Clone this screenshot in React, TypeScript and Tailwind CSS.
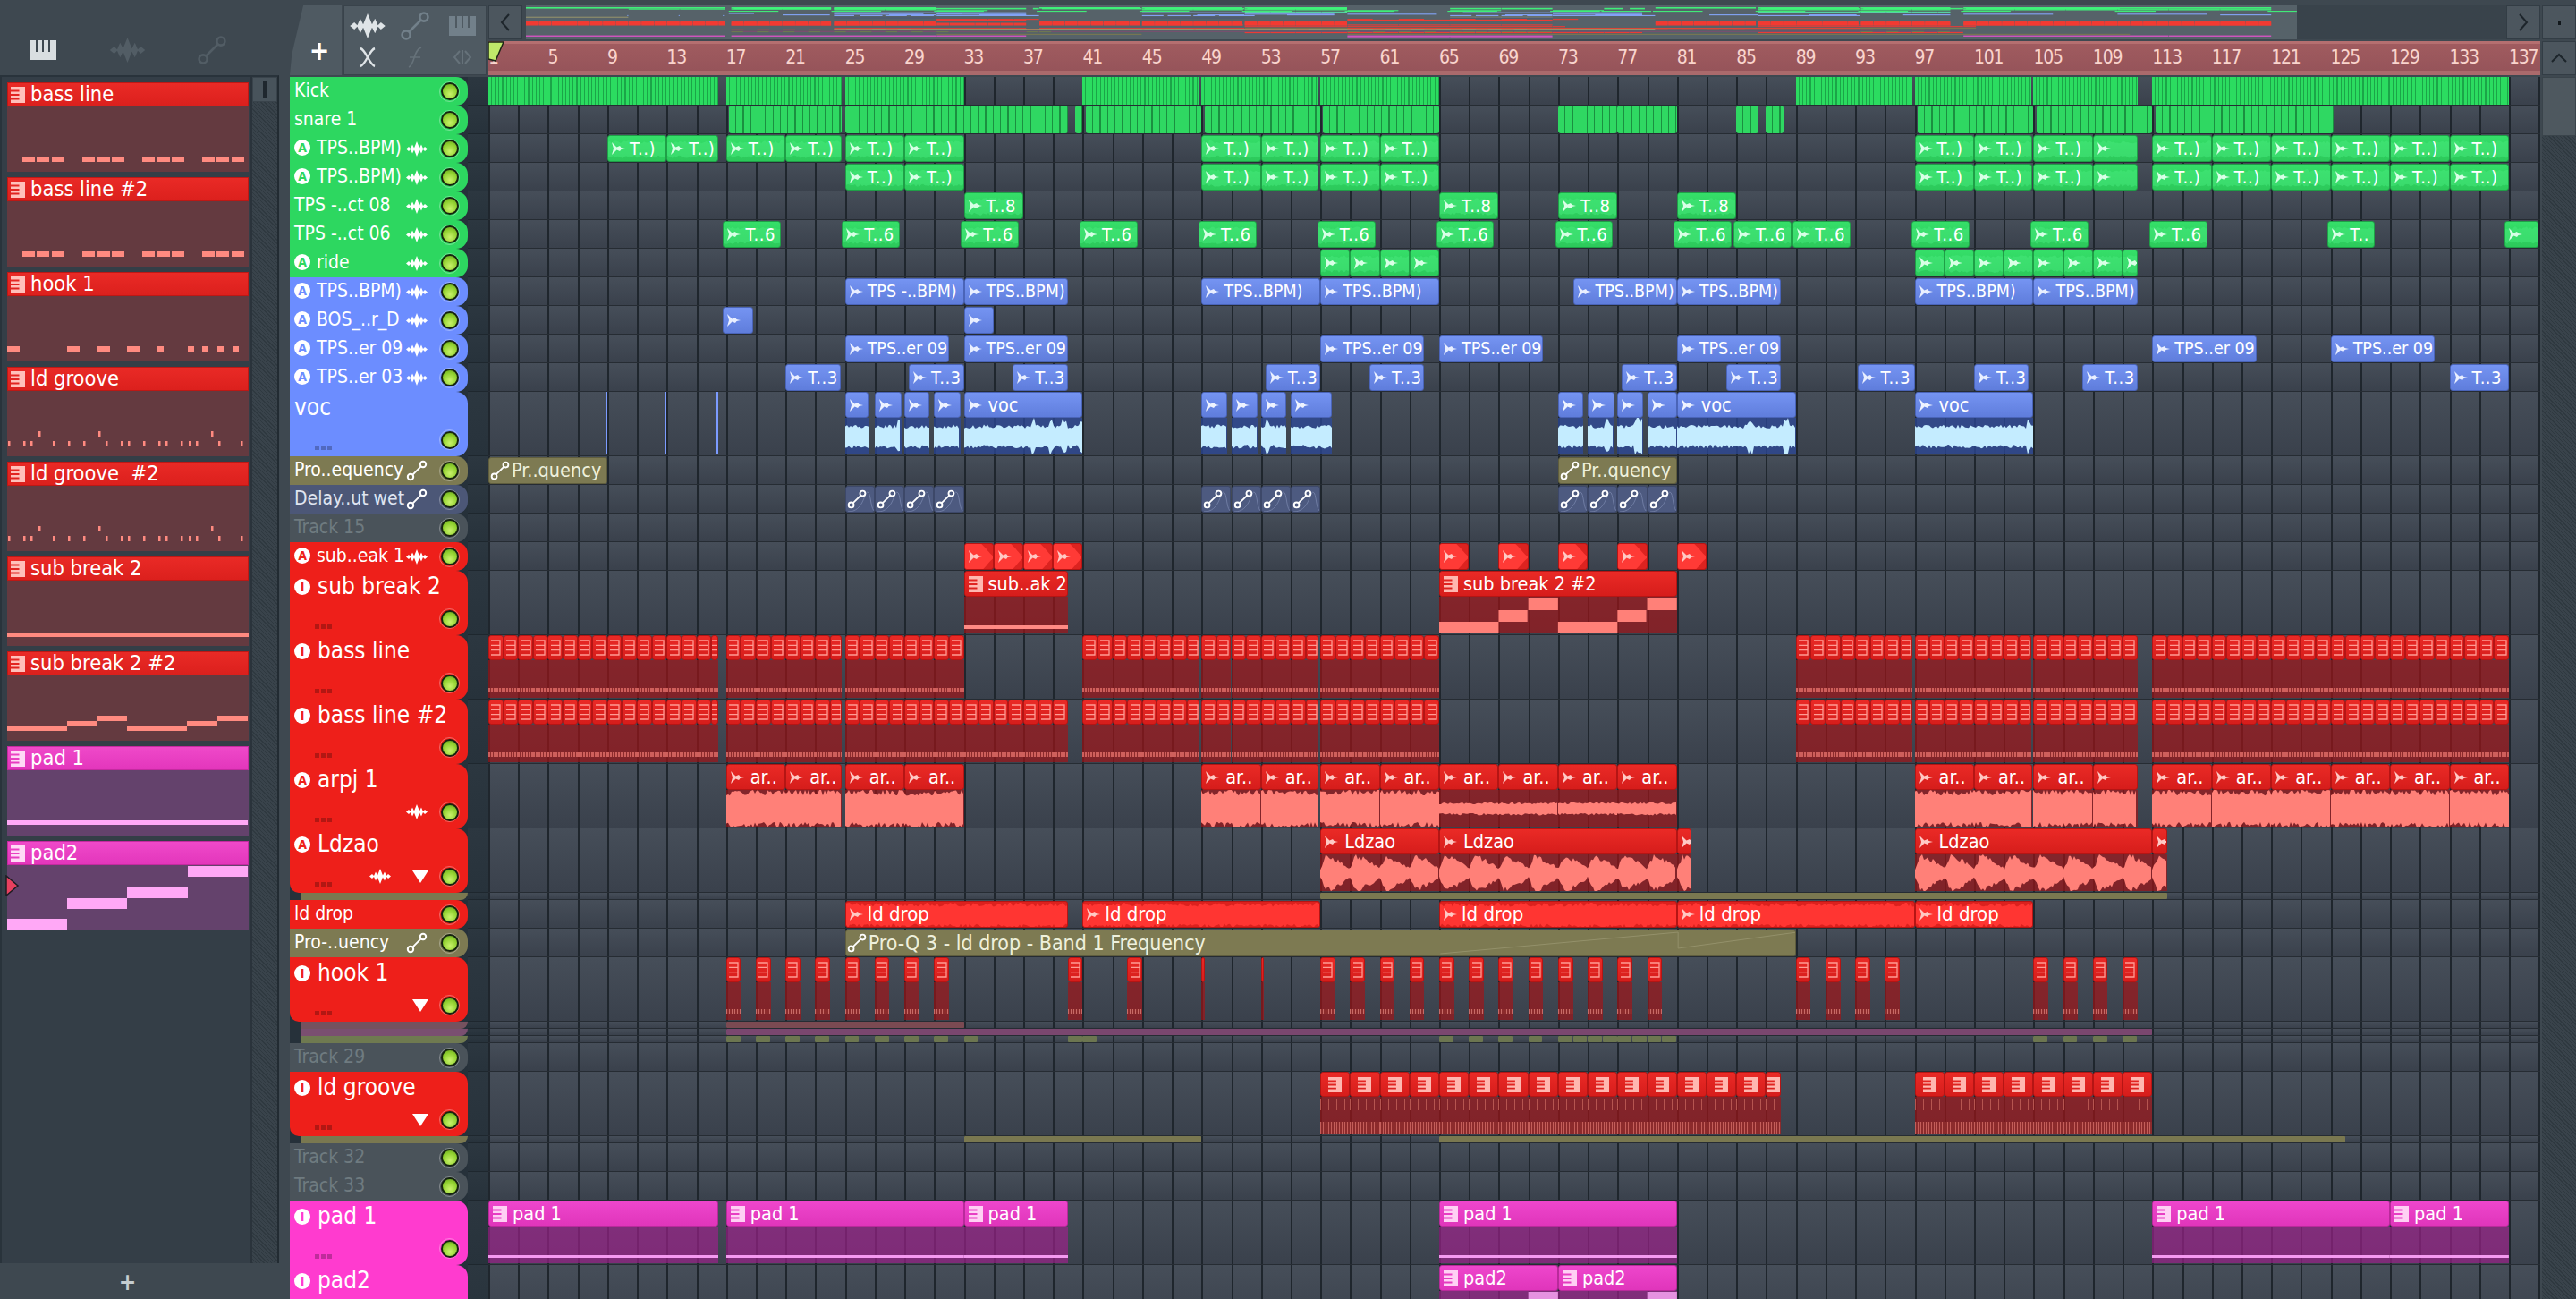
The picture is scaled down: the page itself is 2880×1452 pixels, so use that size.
import React from "react";

const BAR = 16.61;
const px = (b: number) => (b - 1) * BAR;
const rnd = (i: number) => {
  const x = Math.sin(i * 12.9898 + 4.1) * 43758.5453;
  return x - Math.floor(x);
};
function wavePath(w: number, h: number, seed: number, amp: (x: number) => number, step = 2) {
  const top: string[] = [];
  const bot: string[] = [];
  for (let x = 0; x <= w; x += step) {
    const a = Math.min(1, amp(x) * (0.74 + 0.36 * rnd(seed + x)));
    const b = Math.min(1, amp(x) * (0.74 + 0.36 * rnd(seed + x + 777)));
    top.push(`${x} ${(h / 2 - (a * h) / 2).toFixed(1)}`);
    bot.unshift(`${x} ${(h / 2 + (b * h) / 2).toFixed(1)}`);
  }
  return "M" + top.concat(bot).join("L") + "Z";
}

const WaveIcon = ({ c = "#fff", w = 24, h = 17 }: { c?: string; w?: number; h?: number }) => (
  <svg width={w} height={h} viewBox="0 0 24 17" className="shrink-0">
    <path fill={c} d="M0 8.5L3 6L5 8L7 3.5L9 7.5L12 0L15 7.5L17 3.5L19 8L21 6L24 8.5L21 11L19 9L17 13.5L15 9.5L12 17L9 9.5L7 13.5L5 9L3 11Z" />
  </svg>
);
const AutoIcon = ({ c = "#fff", s = 22, sw = 2 }: { c?: string; s?: number; sw?: number }) => (
  <svg width={s} height={s} viewBox="0 0 24 24" fill="none" stroke={c} strokeWidth={sw} className="shrink-0">
    <circle cx="5" cy="19" r="3.2" />
    <circle cx="19" cy="5" r="3.2" />
    <path d="M7.4 16.6L16.6 7.4" />
  </svg>
);
const PianoBig = ({ c = "#fff" }: { c?: string }) => (
  <svg width="30" height="22" viewBox="0 0 30 22" className="shrink-0">
    <path fill={c} fillRule="evenodd" d="M0 0H30V22H0ZM7 0H9V13H7ZM14 0H16V13H14ZM21 0H23V13H21Z" />
  </svg>
);
const PianoClip = ({ c = "#ffb7b0", w = 16, h = 18 }: { c?: string; w?: number; h?: number }) => (
  <svg width={w} height={h} viewBox="0 0 16 18" className="shrink-0">
    <path fill={c} fillRule="evenodd" d="M0 0H16V18H0ZM0 3.6H9.5V5.6H0ZM0 8H9.5V10H0ZM0 12.4H9.5V14.4H0Z" />
  </svg>
);
const PianoLines = () => (
  <svg width="12" height="20" viewBox="0 0 12 20" fill="none" stroke="#ff9c94" strokeWidth="1.3" className="shrink-0">
    <path d="M1 2H11V18H1M1 7.3H11M1 12.6H11" />
  </svg>
);
const AudioGlyph = ({ c = "#fff" }: { c?: string }) => (
  <svg width="16" height="16" viewBox="0 0 16 16" className="shrink-0">
    <path fill={c} d="M1 1L6.5 6.5L10 5L11.5 7L16 8L11.5 9L10 11L6.5 9.5L1 15L3 8Z" />
  </svg>
);
const Led = () => (
  <div className="w-[23px] h-[23px] shrink-0 rounded-full border-[1.5px] border-[#ffffff55] flex items-center justify-center">
    <div className="w-[20px] h-[20px] rounded-full bg-[radial-gradient(circle_at_50%_70%,#c8f26a,#8fcf2e_60%,#5f9a1e)] border-[2.5px] border-[#16240f]" />
  </div>
);
const Arrow = () => <div className="w-0 h-0 shrink-0 mr-[12px] border-l-[9px] border-r-[9px] border-t-[14px] border-l-transparent border-r-transparent border-t-white" />;

type Clip = [number, number, string?];
type Kind = "kick" | "snare" | "audio" | "autoOlive" | "autoSlate" | "chev" | "notes" | "wave" | "strip" | "chunk" | "mini";
type Track = {
  name?: string; color: string; text?: string; h: number; badge?: "A" | "I"; glyph?: "wave" | "auto";
  arrow?: boolean; kind?: Kind; clips?: Clip[]; pal?: "green" | "blue" | "red" | "pink"; variant?: string; tall?: boolean; dim?: boolean;
};

const range = (from: number, to: number, step: number, w: number): Clip[] => {
  const out: Clip[] = [];
  for (let b = from; b < to - 0.01; b += step) out.push([b, Math.min(b + w, to)]);
  return out;
};
const GREEN = "#2dd760", BLUE = "#6c8dff", RED = "#ee1f1a", PINK = "#ff3bcf", OLIVE = "#7d7a52", SLATE = "#4c5777", GREY = "#4a535a";

const tpsA: Clip[] = [[25, 29, "T..)"], [29, 33, "T..)"], [49, 53, "T..)"], [53, 56.9, "T..)"], [57, 61, "T..)"], [61, 65, "T..)"], [97, 101, "T..)"], [101, 104.9, "T..)"], [105, 109, "T..)"], [109, 112, ""], [113, 117, "T..)"], [117, 121, "T..)"], [121, 125, "T..)"], [125, 129, "T..)"], [129, 133, "T..)"], [133, 137, "T..)"]];
const bassTail: Clip[] = [...range(41, 48.85, 1, 1), ...range(49, 56.85, 1, 1), ...range(57, 65, 1, 1), ...range(89, 96.85, 1, 1), ...range(97, 104.85, 1, 1), ...range(105, 112, 1, 1), ...range(113, 137, 1, 1)];
const bassA: Clip[] = [...range(1, 16.5, 1, 1), ...range(17, 24.8, 1, 1), ...range(25, 33, 1, 1), ...bassTail];
const bassB: Clip[] = [...range(1, 16.5, 1, 1), ...range(17, 24.8, 1, 1), ...range(25, 40, 1, 1), ...bassTail];

const tracks: Track[] = [
  { name: "Kick", color: GREEN, h: 32, kind: "kick", clips: [[1, 16.5], [17, 24.8], [25, 33], [41, 48.85], [49, 56.85], [57, 65], [89, 96.85], [97, 104.85], [105, 112], [113, 137]] },
  { name: "snare 1", color: GREEN, h: 32, kind: "snare", clips: [[17.2, 24.8], [25, 40], [40.5, 41], [41.2, 49], [49.2, 57], [57.2, 65], [73, 77], [77, 81], [85, 86.5], [87, 88.2], [97.2, 105], [105.2, 113], [113.2, 125.2]] },
  { name: "TPS..BPM)", badge: "A", glyph: "wave", color: GREEN, h: 32, kind: "audio", pal: "green", clips: [[9, 13, "T..)"], [13, 16.5, "T..)"], [17, 21, "T..)"], [21, 24.8, "T..)"], ...tpsA] },
  { name: "TPS..BPM)", badge: "A", glyph: "wave", color: GREEN, h: 32, kind: "audio", pal: "green", clips: tpsA },
  { name: "TPS -..ct 08", glyph: "wave", color: GREEN, h: 32, kind: "audio", pal: "green", clips: [[33, 37, "T..8"], [65, 69, "T..8"], [73, 77, "T..8"], [81, 85, "T..8"]] },
  { name: "TPS -..ct 06", glyph: "wave", color: GREEN, h: 32, kind: "audio", pal: "green", clips: [[16.8, 20.7, "T..6"], [24.8, 28.7, "T..6"], [32.8, 36.7, "T..6"], [40.8, 44.7, "T..6"], [48.8, 52.7, "T..6"], [56.8, 60.7, "T..6"], [64.8, 68.7, "T..6"], [72.8, 76.7, "T..6"], [80.8, 84.7, "T..6"], [84.8, 88.7, "T..6"], [88.8, 92.7, "T..6"], [96.8, 100.7, "T..6"], [104.8, 108.7, "T..6"], [112.8, 116.7, "T..6"], [124.8, 128, "T.."], [136.7, 139, ""]] },
  { name: "ride", badge: "A", glyph: "wave", color: GREEN, h: 32, kind: "audio", pal: "green", clips: [...range(57, 65, 2, 2), ...range(97, 112, 2, 2)] },
  { name: "TPS..BPM)", badge: "A", glyph: "wave", color: BLUE, h: 32, kind: "audio", pal: "blue", clips: [[25, 33, "TPS -..BPM)"], [33, 40, "TPS..BPM)"], [49, 57, "TPS..BPM)"], [57, 65, "TPS..BPM)"], [74, 81, "TPS..BPM)"], [81, 88, "TPS..BPM)"], [97, 105, "TPS..BPM)"], [105, 112, "TPS..BPM)"]] },
  { name: "BOS_..r_D", badge: "A", glyph: "wave", color: BLUE, h: 32, kind: "audio", pal: "blue", clips: [[16.8, 18.8, ""], [33, 35, ""]] },
  { name: "TPS..er 09", badge: "A", glyph: "wave", color: BLUE, h: 32, kind: "audio", pal: "blue", clips: [[25, 32, "TPS..er 09"], [33, 40, "TPS..er 09"], [57, 64, "TPS..er 09"], [65, 72, "TPS..er 09"], [81, 88, "TPS..er 09"], [113, 120, "TPS..er 09"], [125, 132, "TPS..er 09"]] },
  { name: "TPS..er 03", badge: "A", glyph: "wave", color: BLUE, h: 32, kind: "audio", pal: "blue", clips: [[21, 24.7, "T..3"], [29.3, 33, "T..3"], [36.3, 40, "T..3"], [53.3, 57, "T..3"], [60.3, 64, "T..3"], [77.3, 81, "T..3"], [84.3, 88, "T..3"], [93.2, 97, "T..3"], [101, 104.7, "T..3"], [108.3, 112, "T..3"], [133, 137, "T..3"]] },
  { name: "voc", color: BLUE, h: 72, tall: true, kind: "wave", pal: "blue", variant: "voc", clips: [[8.9, 9], [12.9, 13], [16.35, 16.45], [25, 26.6, ""], [27, 28.8, ""], [29, 30.7, ""], [31, 32.8, ""], [33, 41, "voc"], [49, 50.7, ""], [51, 52.8, ""], [53, 54.7, ""], [55, 57.8, ""], [73, 74.7, ""], [75, 76.8, ""], [77, 78.7, ""], [79, 81, ""], [81, 89, "voc"], [97, 105, "voc"]] },
  { name: "Pro..equency", glyph: "auto", color: OLIVE, h: 32, kind: "autoOlive", clips: [[1, 9, "Pr..quency"], [73, 81, "Pr..quency"]] },
  { name: "Delay..ut wet", glyph: "auto", color: SLATE, text: "text-[#dfe4f0]", h: 32, kind: "autoSlate", clips: [...range(25, 33, 2, 2), ...range(49, 57, 2, 2), ...range(73, 81, 2, 2)] },
  { name: "Track 15", color: GREY, text: "text-[#6f7b80]", h: 32, dim: true },
  { name: "sub..eak 1", badge: "A", glyph: "wave", color: RED, h: 32, kind: "chev", clips: [[33, 35], [35, 37], [37, 39], [39, 41], [65, 67], [69, 71], [73, 75], [77, 79], [81, 83]] },
  { name: "sub break 2", badge: "I", color: RED, h: 72, tall: true, kind: "notes", pal: "red", variant: "sub", clips: [[33, 40, "sub..ak 2"], [65, 81, "sub break 2 #2"]] },
  { name: "bass line", badge: "I", color: RED, h: 72, tall: true, kind: "chunk", pal: "red", variant: "bass", clips: bassA },
  { name: "bass line #2", badge: "I", color: RED, h: 72, tall: true, kind: "chunk", pal: "red", variant: "bass", clips: bassB },
  { name: "arpj 1", badge: "A", glyph: "wave", color: RED, h: 72, tall: true, kind: "wave", pal: "red", variant: "arp", clips: [[17, 21, "ar.."], [21, 24.8, "ar.."], [25, 29, "ar.."], [29, 33, "ar.."], [49, 53, "ar.."], [53, 56.9, "ar.."], [57, 61, "ar.."], [61, 65, "ar.."], [65, 69, "ar.."], [69, 73, "ar.."], [73, 77, "ar.."], [77, 81, "ar.."], [97, 101, "ar.."], [101, 104.9, "ar.."], [105, 109, "ar.."], [109, 112, ""], [113, 117, "ar.."], [117, 121, "ar.."], [121, 125, "ar.."], [125, 129, "ar.."], [129, 133, "ar.."], [133, 137, "ar.."]] },
  { name: "Ldzao", badge: "A", glyph: "wave", arrow: true, color: RED, h: 72, tall: true, kind: "wave", pal: "red", variant: "ldz", clips: [[57, 65, "Ldzao"], [65, 81, "Ldzao"], [81, 82, ""], [97, 113, "Ldzao"], [113, 114, ""]] },
  { color: "#7a7850", h: 8, kind: "strip", variant: "olive", clips: [[57, 114]] },
  { name: "ld drop", color: RED, h: 32, kind: "audio", pal: "red", variant: "drop", clips: [[25, 40, "ld drop"], [41, 57, "ld drop"], [65, 81, "ld drop"], [81, 97, "ld drop"], [97, 105, "ld drop"]] },
  { name: "Pro-..uency", glyph: "auto", color: OLIVE, h: 32, kind: "autoOlive", variant: "band", clips: [[25, 89, "Pro-Q 3 - ld drop - Band 1 Frequency"]] },
  { name: "hook 1", badge: "I", arrow: true, color: RED, h: 72, tall: true, kind: "chunk", pal: "red", variant: "hook", clips: [...range(17, 33, 2, 1), [40, 41], [44, 45], [49, 49.2], [53, 53.2], ...range(57, 81, 2, 1), ...range(89, 97, 2, 1), ...range(105, 113, 2, 1)] },
  { color: "#75525f", h: 8, kind: "strip", variant: "rose", clips: [[17, 33]] },
  { color: "#7a4f70", h: 8, kind: "strip", variant: "plum", clips: [[17, 113]] },
  { color: "#6f7a50", h: 8, kind: "strip", variant: "moss", clips: [...range(17, 33, 2, 0.95), [33, 33.95], [40, 40.95], [41, 41.95], ...range(65, 73, 2, 0.95), ...range(73, 81, 1, 0.95), ...range(105, 113, 2, 0.95)] },
  { name: "Track 29", color: GREY, text: "text-[#6f7b80]", h: 32, dim: true },
  { name: "ld groove", badge: "I", arrow: true, color: RED, h: 72, tall: true, kind: "chunk", pal: "red", variant: "groove", clips: [...range(57, 88, 2, 2), ...range(97, 113, 2, 2)] },
  { color: "#7a7850", h: 8, kind: "strip", variant: "olive", clips: [[33, 49], [65, 126]] },
  { name: "Track 32", color: GREY, text: "text-[#6f7b80]", h: 32, dim: true },
  { name: "Track 33", color: GREY, text: "text-[#6f7b80]", h: 32, dim: true },
  { name: "pad 1", badge: "I", color: PINK, h: 72, tall: true, kind: "notes", pal: "pink", variant: "pad1", clips: [[1, 16.5, "pad 1"], [17, 33, "pad 1"], [33, 40, "pad 1"], [65, 81, "pad 1"], [113, 129, "pad 1"], [129, 137, "pad 1"]] },
  { name: "pad2", badge: "I", color: PINK, h: 72, tall: true, kind: "notes", pal: "pink", variant: "pad2", clips: [[65, 73, "pad2"], [73, 81, "pad2"]] },
];

const headPal = {
  green: "bg-[linear-gradient(180deg,#35df69,#2cc95b)] border-[#1f9f47]",
  blue: "bg-[linear-gradient(180deg,#7594f2,#5f7ddc)] border-[#4a64b8]",
  red: "bg-[linear-gradient(180deg,#ea2a26,#d61d1b)] border-[#b51514]",
  pink: "bg-[linear-gradient(180deg,#ee46cc,#e035bb)] border-[#b92a9b]",
};
const bodyPal = {
  green: "bg-[#1e8a3e]",
  blue: "bg-[#2c4aa0]/70",
  red: "bg-[#a81216]/65",
  pink: "bg-[#a3208f]/65",
};

const ClipLabel = ({ t, large }: { t?: string; large?: boolean }) => {
  if (!t) return null;
  const cls = large
    ? "text-[21.5px]"
    : t === "ld drop"
      ? "text-[22px]"
      : t.includes("BPM")
        ? "text-[19.5px]"
        : t.length <= 4
          ? "text-[20px] tracking-[0.5px]"
          : "text-[19.5px]";
  return <span className={`text-white whitespace-nowrap leading-[26px] ${cls}`}>{t}</span>;
};

function ClipWave({ w, h, seed, variant, start }: { w: number; h: number; seed: number; variant: string; start: number }) {
  const amp =
    variant === "voc"
      ? (x: number) => 0.5 + (rnd(seed + Math.floor(x / 5)) > 0.9 ? 0.45 : 0.08)
      : variant === "arp"
        ? () => (start >= 65 && start < 81 ? 0.32 : 0.95)
        : (x: number) => {
            const p = ((x + (start - 1) * BAR) % (2 * BAR)) / (2 * BAR);
            return 0.22 + 0.78 * (p < 0.2 ? p / 0.2 : Math.pow(1 - (p - 0.2) / 0.8, 0.7));
          };
  const fill = variant === "voc" ? "#c4ecff" : "#ff8078";
  return (
    <svg width={w} height={h} viewBox={`0 0 ${w} ${h}`} preserveAspectRatio="none" className="absolute left-0 top-0">
      <path d={wavePath(w, h, seed, amp)} fill={fill} />
    </svg>
  );
}

function TimelineClip({ c, t, i }: { c: Clip; t: Track; i: number }) {
  const left = px(c[0]);
  const width = (c[1] - c[0]) * BAR;
  const st = { left, width };
  const kind = t.kind;
  if (kind === "kick")
    return <div style={st} className="absolute top-0 h-[31px] bg-[repeating-linear-gradient(90deg,#2bdc60_0px,#2bdc60_3px,#1ba548_3px,#1ba548_4.15px)]" />;
  if (kind === "snare")
    return <div style={st} className="absolute top-0 h-[31px] rounded-[3px] bg-[repeating-linear-gradient(90deg,#2fd862_0px,#2fd862_7px,#1b8f40_7px,#1b8f40_8.3px)]" />;
  if (kind === "strip") {
    const col =
      t.variant === "rose" ? "bg-[#7b4a52]" : t.variant === "plum" ? "bg-[#7a476f]" : t.variant === "moss" ? "bg-[#6c7650]" : "bg-[#7a7850]";
    return <div style={st} className={`absolute top-0 h-[7px] rounded-[1px] ${col}`} />;
  }
  if (kind === "autoOlive" || kind === "autoSlate") {
    const olive = kind === "autoOlive";
    const band = t.variant === "band";
    return (
      <div style={st} className={`absolute top-[1px] h-[30px] rounded-[3px] border overflow-hidden flex items-center gap-[2px] pl-[1px] ${olive ? "bg-[#7d7a52] border-[#5f5d3e]" : "bg-[#4d5a80] border-[#3d4869]"}`}>
        {band && (
          <svg width={width} height={30} viewBox={`0 0 ${width} 30`} className="absolute left-0 top-0" fill="none" stroke="#94916a" strokeWidth="1">
            <path d={`M${px(65) - px(25)} 26L${px(81) - px(25)} 2L${px(81) - px(25)} 20L${px(89) - px(25)} 2`} />
          </svg>
        )}
        {!olive && (
          <svg width={width} height={30} viewBox={`0 0 ${width} 30`} className="absolute left-0 top-0" fill="none" stroke="#6f7ca3" strokeWidth="1">
            <path d={`M2 28C${width * 0.6} 28 ${width * 0.6} 6 ${width * 0.72} 6C${width * 0.85} 6 ${width * 0.8} 28 ${width} 28`} />
          </svg>
        )}
        <div className="relative shrink-0"><AutoIcon s={22} /></div>
        {c[2] && <span className={`relative text-[#eef0dc] leading-[26px] whitespace-nowrap ${band ? "text-[23px]" : "text-[21.5px]"}`}>{c[2]}</span>}
      </div>
    );
  }
  if (kind === "chev")
    return (
      <div style={st} className="absolute top-[1px] h-[30px] rounded-[3px] border border-[#b51514] bg-[#dc2320] overflow-hidden flex items-center pl-[3px]">
        <svg width={width} height={30} viewBox={`0 0 ${width} 30`} preserveAspectRatio="none" className="absolute left-0 top-0">
          <path d={`M0 0H${width * 0.55}C${width * 0.75} 6 ${width * 0.85} 12 ${width} 15C${width * 0.85} 18 ${width * 0.75} 24 ${width * 0.55} 30H0Z`} fill="#ff3a36" />
        </svg>
        <div className="relative"><AudioGlyph c="#ffc9c4" /></div>
      </div>
    );
  if (kind === "audio") {
    const drop = t.variant === "drop";
    const pal = t.pal || "green";
    const w = Math.max(width, 1);
    return (
      <div style={st} className={`absolute top-[1px] h-[30px] rounded-[3px] border overflow-hidden flex items-center gap-[5px] pl-[3px] ${drop ? "bg-[#dc211e] border-[#b51514]" : headPal[pal]}`}>
        {pal !== "blue" && (
          <svg width={w} height={30} viewBox={`0 0 ${w} 30`} preserveAspectRatio="none" className="absolute left-0 top-0">
            <path d={wavePath(w, 30, i * 13 + 3, () => (drop ? 0.86 : 0.6))} fill={drop ? "#ff3532" : "#45e87a"} opacity={drop ? 1 : 0.55} />
          </svg>
        )}
        <div className="relative"><AudioGlyph c={pal === "green" ? "#d8ffe6" : pal === "blue" ? "#e9efff" : "#ffc9c4"} /></div>
        {c[2] && <span className="relative"><ClipLabel t={c[2]} /></span>}
      </div>
    );
  }
  const pal = t.pal || "red";
  const head = headPal[pal];
  const body = bodyPal[pal];
  if (kind === "wave") {
    const h = 42;
    if (width < 4) return <div style={st} className="absolute top-0 bottom-[1px] bg-[#7c9bff]" />;
    return (
      <div style={st} className="absolute top-0 bottom-[1px] flex flex-col">
        <div className={`h-[29px] shrink-0 rounded-[3px] border overflow-hidden flex items-center gap-[7px] pl-[3px] ${head}`}>
          <AudioGlyph c={pal === "blue" ? "#eef3ff" : "#ffc9c4"} />
          <ClipLabel t={c[2]} large />
        </div>
        <div className={`relative flex-1 overflow-hidden ${body}`}>
          <ClipWave w={width} h={h} seed={i * 91 + 5} variant={t.variant || "arp"} start={c[0]} />
        </div>
      </div>
    );
  }
  if (kind === "chunk") {
    const v = t.variant;
    return (
      <div style={st} className="absolute top-0 bottom-[1px] flex flex-col">
        <div className={`h-[28px] shrink-0 rounded-[3px] border overflow-hidden flex items-center justify-center ${head}`}>
          {width > 5 && (v === "groove" ? <PianoClip w={15} h={17} /> : <PianoLines />)}
        </div>
        <div className={`relative flex-1 ${body}`}>
          {v === "bass" && <div className="absolute left-0 right-0 bottom-[6px] h-[5px] bg-[repeating-linear-gradient(90deg,#cf5f5c_0px,#cf5f5c_2px,#8c2b2c_2px,#8c2b2c_3px)]" />}
          {v === "hook" && width > 5 && <div className="absolute left-0 right-0 bottom-[7px] h-[5px] bg-[repeating-linear-gradient(90deg,#c86a66_0px,#c86a66_1px,#8c2b2c_1px,#8c2b2c_3px)]" />}
          {v === "groove" && <div className="absolute inset-x-0 top-[2px] h-[13px] bg-[repeating-linear-gradient(90deg,#b65550_0px,#b65550_1px,transparent_1px,transparent_9px)]" />}
          {v === "groove" && <div className="absolute inset-x-0 bottom-0 h-[14px] bg-[repeating-linear-gradient(90deg,#c45e5a_0px,#c45e5a_1px,#8c2b2c_1px,#8c2b2c_3px)]" />}
        </div>
      </div>
    );
  }
  // piano-roll clip with note drawing
  const base = (b: number) => (b - c[0]) * BAR;
  return (
    <div style={st} className="absolute top-0 bottom-[1px] flex flex-col">
      <div className={`h-[29px] shrink-0 rounded-[3px] border overflow-hidden flex items-center gap-[6px] pl-[4px] ${head}`}>
        <PianoClip c={pal === "pink" ? "#ffd0f4" : "#ffb7b0"} />
        <ClipLabel t={c[2]} large />
      </div>
      <div className={`relative flex-1 overflow-hidden ${body}`}>
        <svg width={width} height={42} viewBox={`0 0 ${width} 42`} className="absolute left-0 top-0">
          {t.variant === "sub" && c[0] === 33 && <rect x="0" y="32" width={width} height="4" fill="#ff8a84" />}
          {t.variant === "sub" && c[0] === 65 && (
            <g fill="#ff8078">
              <rect x="0" y="28" width={base(69)} height="13" />
              <rect x={base(69)} y="15" width={2 * BAR - 1} height="13" />
              <rect x={base(71)} y="1" width={2 * BAR} height="14" />
              <rect x={base(73)} y="28" width={4 * BAR} height="13" />
              <rect x={base(77)} y="15" width={2 * BAR - 1} height="13" />
              <rect x={base(79)} y="1" width={2 * BAR} height="14" />
            </g>
          )}
          {t.variant === "pad1" && <rect x="0" y="32" width={width} height="3" fill="#f49af0" />}
          {t.variant === "pad2" && <rect x={width - 2 * BAR} y="1" width={2 * BAR} height="8" fill="#e592e0" />}
        </svg>
      </div>
    </div>
  );
}

function TrackHeader({ t }: { t: Track }) {
  const shape = "rounded-r-[13px]";
  if (!t.name)
    return <div style={{ background: t.color }} className="w-[199px] h-full ml-0 rounded-br-[10px] relative"><div className="absolute left-0 top-0 bottom-0 w-[12px] bg-[#26313a]" /></div>;
  const badge = t.badge && (
    <div className="w-[18px] h-[18px] shrink-0 rounded-full bg-white flex items-center justify-center text-[14px] font-bold leading-none" style={{ color: t.color }}>
      {t.badge}
    </div>
  );
  if (t.tall)
    return (
      <div style={{ background: t.color }} className={`w-[199px] h-full relative flex flex-col justify-between pt-[3px] pb-[7px] pr-[9px] ${shape} ${t.arrow ? "rounded-bl-[10px]" : ""}`}>
        <div className="flex items-center gap-[8px] pl-[5px] text-white text-[26px] leading-[29px] whitespace-nowrap">
          {badge}
          <span>{t.name}</span>
        </div>
        <div className="flex items-center justify-end">
          {t.glyph === "wave" && <div className={t.arrow ? "mr-[24px]" : "mr-[13px]"}><WaveIcon /></div>}
          {t.arrow && <Arrow />}
          <Led />
        </div>
        <div className="absolute left-[28px] bottom-[7px] flex gap-[2px]">
          <i className="w-[5px] h-[5px] bg-black/25" /><i className="w-[5px] h-[5px] bg-black/25" /><i className="w-[5px] h-[5px] bg-black/25" />
        </div>
      </div>
    );
  return (
    <div style={{ background: t.color }} className={`w-[199px] h-full flex items-center pr-[9px] text-[21px] leading-[26px] whitespace-nowrap ${shape} ${t.text || "text-white"}`}>
      <div className="flex items-center gap-[7px] pl-[5px] flex-1 min-w-0 pb-[2px]">
        {badge}
        <span>{t.name}</span>
      </div>
      {t.glyph === "wave" && <div className="mr-[13px]"><WaveIcon /></div>}
      {t.glyph === "auto" && <div className="mr-[13px]"><AutoIcon s={24} /></div>}
      <Led />
    </div>
  );
}

function Overview() {
  let top = 0;
  const rects: React.ReactNode[] = [];
  tracks.forEach((t, ti) => {
    const y = 2 + top * 0.0252;
    const h = t.variant === "bass" ? 3 : t.kind === "kick" || t.kind === "snare" ? 1.6 : 1.1;
    (t.clips || []).forEach((c, ci) => {
      const fill = t.kind === "strip" ? t.color : t.color === GREEN ? "#3ff57a" : t.color === BLUE ? "#86a8ff" : t.color === RED ? "#f63a32" : t.color === PINK ? "#ff4fe0" : t.color === OLIVE ? "#96936a" : t.color;
      rects.push(<rect key={`${ti}-${ci}`} x={(c[0] - 1) * 14.35} y={y} width={Math.max((c[1] - c[0]) * 14.35 - 0.4, 0.8)} height={h} fill={fill} opacity={0.95} />);
    });
    top += t.h;
  });
  return (
    <svg width="1980" height="38" viewBox="0 0 1980 38" className="block">
      {rects}
    </svg>
  );
}

const SmallBtn = ({ children, className = "" }: { children?: React.ReactNode; className?: string }) => (
  <div className={`w-[38px] h-[38px] shrink-0 bg-[#4c565e] border border-[#333d45] flex items-center justify-center ${className}`}>{children}</div>
);

type Note = [number, number, number, number];
const rep = (xs: number[], y: number, w: number, h: number): Note[] => xs.map((x) => [x, y, w, h]);
const grooveLow = [1, 18, 26, 51, 68, 85, 110, 127, 135, 152, 169, 177, 194, 203, 211, 236, 261];
const pickers: { name: string; pink?: boolean; notes: Note[] }[] = [
  { name: "bass line", notes: rep([17, 33, 50, 84, 101, 117, 151, 168, 184, 218, 234, 251], 56, 14, 6) },
  { name: "bass line #2", notes: rep([17, 33, 50, 84, 101, 117, 151, 168, 184, 218, 234, 251], 56, 14, 6) },
  { name: "hook 1", notes: [[0, 56, 14, 6], [67, 56, 14, 6], [101, 56, 14, 6], [134, 56, 14, 6], [168, 56, 7, 6], [202, 56, 7, 6], [218, 56, 7, 6], [235, 56, 7, 6], [252, 56, 7, 6]] },
  { name: "ld groove", notes: [...rep(grooveLow, 56, 2.5, 6), ...rep([35, 102, 228], 45, 2.5, 6)] },
  { name: "ld groove  #2", notes: [...rep(grooveLow, 56, 2.5, 6), ...rep([35, 102, 228], 45, 2.5, 6)] },
  { name: "sub break 2", notes: [[0, 58, 270, 5]] },
  { name: "sub break 2 #2", notes: [[0, 56, 67, 6], [67, 51, 34, 5], [101, 45, 33, 6], [134, 56, 67, 6], [201, 51, 34, 5], [235, 45, 34, 6]] },
  { name: "pad 1", pink: true, notes: [[0, 56, 269, 5]] },
  { name: "pad2", pink: true, notes: [[0, 60, 67, 12], [67, 37, 67, 12], [134, 25, 68, 12], [202, 1, 67, 12]] },
];

function PickerItem({ p }: { p: (typeof pickers)[number] }) {
  return (
    <div className="w-[270px] h-[100px] flex flex-col shrink-0">
      <div className={`h-[27px] border flex items-center gap-[6px] pl-[3px] text-white text-[23.5px] leading-[25px] whitespace-pre ${p.pink ? "bg-[linear-gradient(180deg,#ef49c9,#e336bc)] border-[#c42aa0]" : "bg-[linear-gradient(180deg,#e92a26,#dc201d)] border-[#bd1815]"}`}>
        <PianoClip c={p.pink ? "#ffd9f6" : "#ffc0ba"} />
        <span>{p.name}</span>
      </div>
      <svg width="270" height="73" viewBox="0 0 270 73" className={`block ${p.pink ? "bg-[#64426c]" : "bg-[#643a40]"}`}>
        {p.notes.map((n, i) => (
          <rect key={i} x={n[0]} y={n[1]} width={n[2]} height={n[3]} fill={p.pink ? "#ffa8f6" : "#ff8a80"} />
        ))}
      </svg>
    </div>
  );
}

export default function App() {
  return (
    <div className="w-[2880px] h-[1452px] overflow-hidden flex bg-[#3e4850] font-['DejaVu_Sans',sans-serif] font-stretch-condensed">
      {/* Picker panel */}
      <div className="w-[312px] h-full flex flex-col shrink-0">
        <div className="h-[84px] flex items-center gap-[59px] pl-[33px] pt-[28px]">
          <PianoBig c="#d9dee1" />
          <WaveIcon c="#525d65" w={41} h={28} />
          <div className="ml-[-2px]"><AutoIcon c="#525d65" s={34} sw={1.8} /></div>
        </div>
        <div className="flex-1 flex min-h-0 border-t-2 border-[#29333b] border-l-2 border-l-[#29333b] border-r-2 border-r-[#222b32] bg-[#343e47]">
          <div className="relative w-[278px] shrink-0 flex flex-col gap-[6px] pl-[6px] pt-[6px]">
            {pickers.map((p) => <PickerItem key={p.name} p={p} />)}
            <svg width="16" height="24" viewBox="0 0 16 24" className="absolute left-[4px] top-[892px]">
              <path d="M1 1L14 12L1 23Z" fill="#e8405f" stroke="#1c1c22" strokeWidth="1.5" />
            </svg>
          </div>
          <div className="flex-1 flex flex-col border-l-2 border-[#2a333b]">
            <div className="h-[28px] bg-[#48535b] border border-[#39434b] flex items-center justify-center"><div className="w-[4px] h-[18px] bg-[#1f272e]" /></div>
            <div className="flex-1 bg-[repeating-linear-gradient(45deg,#2f3940_0px,#2f3940_1px,#39434b_1px,#39434b_3px)]" />
          </div>
        </div>
        <div className="h-[40px] bg-[#3e4850] flex items-center justify-center pr-[27px] pt-[2px]">
          <span className="text-[#c5cdd1] text-[26px] font-bold leading-none">+</span>
        </div>
      </div>

      {/* Playlist */}
      <div className="flex-1 pl-[12px] flex min-w-0">
        <div className="w-[2516px] flex flex-col shrink-0">
          {/* top bar */}
          <div className="h-[86px] flex shrink-0">
            <div className="w-[58px] mt-[6px] h-[78px] bg-[#4f5a62] [clip-path:polygon(26%_0,100%_0,100%_100%,0_100%,4%_70%)] flex items-end justify-center pb-[12px]">
              <span className="text-white text-[30px] leading-none font-bold pl-[8px]">+</span>
            </div>
            <div className="w-[160px] ml-[2px] mt-[6px] h-[78px] bg-[#4f5a62] border border-[#39434b] grid grid-cols-3 place-items-center py-[3px]">
              <WaveIcon c="#dfe4e7" w={40} h={28} />
              <AutoIcon c="#72808a" s={34} sw={1.8} />
              <PianoBig c="#72808a" />
              <svg width="20" height="24" viewBox="0 0 20 24" fill="none" stroke="#dfe4e7" strokeWidth="2.4"><path d="M2 2C8 4 12 20 18 22M18 2C12 4 8 20 2 22" /></svg>
              <svg width="20" height="28" viewBox="0 0 20 28" fill="none" stroke="#66727a" strokeWidth="1.6"><path d="M3 25C10 22 8 6 17 3M4 14H16" /></svg>
              <svg width="22" height="20" viewBox="0 0 22 20" fill="none" stroke="#66727a" strokeWidth="2"><path d="M8 3L2 10L8 17M14 3L20 10L14 17M11 2V18" /></svg>
            </div>
            <div className="w-[2px]" />
            <div className="flex-1 flex flex-col min-w-0">
              <div className="h-[6px]" />
              <div className="h-[38px] flex">
                <SmallBtn>
                  <svg width="14" height="22" viewBox="0 0 14 22" fill="none" stroke="#1d252b" strokeWidth="2"><path d="M11 2L3 11L11 20" /></svg>
                </SmallBtn>
                <div className="w-[4px]" />
                <div className="w-[1980px] h-[38px] bg-[#566269] shrink-0 overflow-hidden"><Overview /></div>
                <div className="flex-1 bg-[#39434b]" />
                <SmallBtn>
                  <svg width="14" height="22" viewBox="0 0 14 22" fill="none" stroke="#1d252b" strokeWidth="2"><path d="M3 2L11 11L3 20" /></svg>
                </SmallBtn>
              </div>
              <div className="h-[2px]" />
              <div className="relative h-[38px] flex bg-[linear-gradient(180deg,#b56f70_0px,#b56f70_3px,#a05b5f_3px,#96545a_33px,#ab6a6c_33px,#ab6a6c_38px)] overflow-hidden">
                {Array.from({ length: 35 }, (_, i) => (
                  <div key={i} className="w-[66.44px] shrink-0 pt-[6px] text-[#f9d4cd] text-[21px] leading-[24px] tracking-[-1.2px]">{1 + i * 4}</div>
                ))}
                <svg width="18" height="24" viewBox="0 0 18 24" className="absolute left-0 top-0">
                  <path d="M0 1H17L8 22L0 20Z" fill="#bfe86a" stroke="#1c2416" strokeWidth="1.5" />
                </svg>
              </div>
              <div className="h-[2px]" />
            </div>
          </div>
          {/* tracks */}
          <div className="flex-1 min-h-0 overflow-hidden flex flex-col bg-[#26313a]">
            {tracks.map((t, i) => (
              <div key={i} style={{ height: t.h }} className="flex shrink-0">
                <TrackHeader t={t} />
                <div className="w-[23px] shrink-0 bg-[linear-gradient(180deg,#2c3740,#27323b)] border-b border-[#1e272e]" />
                <div className="relative flex-1 border-b border-[#262c33] bg-[repeating-linear-gradient(90deg,#1f262d_0px,#1f262d_2px,transparent_2px,transparent_33.22px),linear-gradient(180deg,#464e59,#3a414c)]">
                  {(t.clips || []).map((c, ci) => (
                    <TimelineClip key={ci} c={c} t={t} i={ci + i * 40} />
                  ))}
                </div>
              </div>
            ))}
          </div>
        </div>
        {/* right scroller */}
        <div className="w-[40px] ml-[2px] flex flex-col shrink-0">
          <div className="h-[6px]" />
          <SmallBtn><div className="w-[3px] h-[5px] bg-[#12181c]" /></SmallBtn>
          <div className="h-[2px]" />
          <SmallBtn>
            <svg width="20" height="14" viewBox="0 0 20 14" fill="none" stroke="#1d252b" strokeWidth="2"><path d="M2 11L10 3L18 11" /></svg>
          </SmallBtn>
          <div className="h-[2px]" />
          <div className="h-[66px] w-[38px] bg-[#4e585f] border border-[#3a444b]" />
          <div className="flex-1 w-[38px] bg-[repeating-linear-gradient(45deg,#2f3940_0px,#2f3940_1px,#39434b_1px,#39434b_3px)]" />
        </div>
      </div>
    </div>
  );
}
